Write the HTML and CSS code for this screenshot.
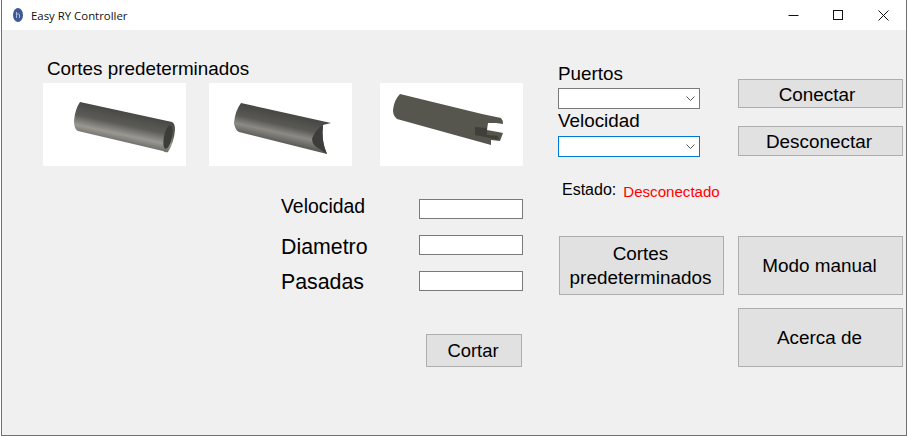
FILE: index.html
```html
<!DOCTYPE html>
<html>
<head>
  <title>Easy RY Controller</title>
  <link rel="stylesheet" href="styles.css">
</head>
<body>
  <div class="window">
    <div class="titlebar">
      <svg class="app-icon" width="12" height="16" viewBox="0 0 12 16">
        <ellipse cx="6" cy="8" rx="5" ry="7" fill="#3d5a96"/>
        <path d="M4.5 11V5M4.5 7.5Q6 6 7.5 7.5V11" fill="none" stroke="#aebbd8" stroke-width="1"/>
      </svg>
      <span class="app-title">Easy RY Controller</span>
      <div class="caption">
        <div class="caption-btn">
          <svg width="11" height="11" viewBox="0 0 11 11"><path d="M0.5 5.5H10.5" stroke="#111" stroke-width="1"/></svg>
        </div>
        <div class="caption-btn">
          <svg width="11" height="11" viewBox="0 0 11 11"><rect x="0.5" y="0.5" width="9" height="9" fill="none" stroke="#111" stroke-width="1"/></svg>
        </div>
        <div class="caption-btn">
          <svg width="11" height="11" viewBox="0 0 11 11"><path d="M0.5 0.5L10.5 10.5M10.5 0.5L0.5 10.5" stroke="#111" stroke-width="1"/></svg>
        </div>
      </div>
    </div>

    <div class="content">
      <div class="cuts">
        <div class="cuts-title">Cortes predeterminados</div>
        <div class="thumbs">
          <svg class="thumb" viewBox="0 0 143 83">
            <defs>
              <linearGradient id="tube1" gradientUnits="userSpaceOnUse" x1="85" y1="27" x2="78" y2="60">
                <stop offset="0" stop-color="#454541"/>
                <stop offset="0.45" stop-color="#5c5b57"/>
                <stop offset="0.75" stop-color="#999892"/>
                <stop offset="1" stop-color="#6a6965"/>
              </linearGradient>
              <linearGradient id="tube2" gradientUnits="userSpaceOnUse" x1="78" y1="28" x2="71" y2="60">
                <stop offset="0" stop-color="#43433f"/>
                <stop offset="0.45" stop-color="#5a5955"/>
                <stop offset="0.7" stop-color="#8b8a84"/>
                <stop offset="1" stop-color="#595854"/>
              </linearGradient>
              <filter id="soft"><feGaussianBlur stdDeviation="0.45"/></filter>
            </defs>
            <g filter="url(#soft)">
              <path d="M37 19L129 39Q132 40 132 47Q131 60 125 69Q123 70 120 68L35 48Q31 46 31 38Q32 26 37 19Z" fill="url(#tube1)"/>
              <ellipse cx="125" cy="54" rx="4" ry="12" transform="rotate(12 125 54)" fill="#3c3c39"/>
            </g>
          </svg>
          <svg class="thumb" viewBox="0 0 143 83">
            <g filter="url(#soft)">
              <path d="M32 20L122 40L114 42Q112 58 118 71L30 49Q26 47 25 40Q26 28 32 20Z" fill="url(#tube2)"/>
              <path d="M114 42Q106 47 103 56Q103 60 106 63L118 71Q112 58 114 42Z" fill="#3d3d3a"/>
            </g>
          </svg>
          <svg class="thumb" viewBox="0 0 143 83">
            <g filter="url(#soft)">
              <path d="M20 11L102 31L121 35Q123 37 123 41L116 40L108 40L107 47L118 49L123 50L120 58L111 57L111 62L17 36Q13 33 13 27Q14 17 20 11Z" fill="#565650"/>
              <path d="M95 44L107 45L107 52L118 53L119 57L110 55L95 52Z" fill="#3f3f3b"/>
            </g>
          </svg>
        </div>
        <div class="params">
          <label class="param-label param-first" for="vel">Velocidad</label>
          <input id="vel" type="text">
          <label class="param-label param-big" for="diam">Diametro</label>
          <input id="diam" type="text">
          <label class="param-label param-big param-last" for="pasadas">Pasadas</label>
          <input id="pasadas" type="text">
        </div>
        <button class="btn btn-cut" type="button">Cortar</button>
      </div>

      <div class="side">
        <div class="side-top">
          <div class="ports">
            <div class="field-label">Puertos</div>
            <div class="combo">
              <svg width="9" height="5" viewBox="0 0 9 5"><path d="M0.5 0.5L4.5 4.500L8.500 0.5" fill="none" stroke="#555" stroke-width="1"/></svg>
            </div>
            <div class="field-label field-second">Velocidad</div>
            <div class="combo combo-focus">
              <svg width="9" height="5" viewBox="0 0 9 5"><path d="M0.5 0.5L4.5 4.500L8.500 0.5" fill="none" stroke="#555" stroke-width="1"/></svg>
            </div>
          </div>
          <div class="connect">
            <button class="btn btn-connect" type="button">Conectar</button>
            <button class="btn btn-disconnect" type="button">Desconectar</button>
          </div>
        </div>

        <div class="status">
          <span class="status-label">Estado:</span>
          <span class="status-value">Desconectado</span>
        </div>

        <div class="actions">
          <button class="btn" type="button">Cortes predeterminados</button>
          <button class="btn" type="button">Modo manual</button>
          <button class="btn btn-about" type="button">Acerca de</button>
        </div>
      </div>
    </div>
  </div>
</body>
</html>
```

FILE: styles.css
```css
html, body {
  margin: 0;
  padding: 0;
  background-color: #fff;
}

body {
  font-family: "Liberation Sans", Arial, sans-serif;
  color: #000;
  overflow: hidden;
}

.window {
  box-sizing: border-box;
  width: 906px;
  height: 436px;
  margin-left: 1px;
  border-left: 1px solid #707070;
  border-right: 1px solid #707070;
  border-bottom: 1px solid #707070;
  display: flex;
  flex-direction: column;
}

.titlebar {
  height: 30px;
  flex: none;
  display: flex;
  align-items: center;
  background-color: #fff;
}

.app-icon {
  margin-left: 10px;
}

.app-title {
  margin-left: 7px;
  font-family: "Open Sans", sans-serif;
  font-size: 11.4px;
  color: #111;
}

.caption {
  margin-left: auto;
  display: flex;
}

.caption-btn {
  width: 45px;
  height: 30px;
  display: flex;
  align-items: center;
  justify-content: center;
}

.content {
  flex: 1;
  display: flex;
  background-color: #f0f0f0;
  padding-left: 41px;
}

.cuts {
  width: 480px;
  padding-top: 29px;
  display: flex;
  flex-direction: column;
}

.cuts-title {
  height: 24px;
  padding-left: 4px;
  font-size: 18.85px;
  line-height: 20px;
}

.thumbs {
  display: flex;
}

.thumb {
  display: block;
  width: 143px;
  height: 83px;
  background-color: #fff;
}

.thumb:nth-child(1) {
  margin-right: 23px;
}

.thumb:nth-child(2) {
  margin-right: 28px;
}

.params {
  margin-top: 33px;
  margin-left: 238px;
  display: grid;
  grid-template-columns: 138px 104px;
  grid-auto-rows: 20px;
  row-gap: 16px;
}

.param-label {
  font-size: 21.33px;
  line-height: 24px;
}

.param-first {
  margin-top: -3px;
  font-size: 19.4px;
  line-height: 20px;
}

.param-last {
  margin-top: -1px;
}

.params input {
  box-sizing: border-box;
  width: 104px;
  height: 20px;
  margin: 0;
  padding: 0 2px;
  border: 1px solid #7a7a7a;
  border-radius: 0;
  background-color: #fff;
  outline: none;
}

.btn {
  box-sizing: border-box;
  margin: 0;
  padding: 0;
  border: 1px solid #adadad;
  border-radius: 0;
  background-color: #e1e1e1;
  color: #000;
  font-family: inherit;
  font-size: 18.9px;
  line-height: 24px;
}

.btn-cut {
  width: 96px;
  height: 33px;
  margin-top: 43px;
  margin-right: 1px;
  padding-right: 2px;
  align-self: flex-end;
  font-size: 18.4px;
}

.side {
  width: 345px;
  margin-left: 35px;
  padding-top: 33px;
}

.side-top {
  display: grid;
  grid-template-columns: 180px 165px;
}

.field-label {
  height: 25px;
  font-size: 18.85px;
  line-height: 21px;
}

.field-second {
  height: 26px;
  margin-top: 1px;
}

.combo {
  box-sizing: border-box;
  width: 142px;
  height: 21px;
  padding-right: 4px;
  border: 1px solid #7a7a7a;
  background-color: #fff;
  display: flex;
  align-items: center;
  justify-content: flex-end;
}

.combo-focus {
  border-color: #0078d7;
}

.connect {
  padding-top: 16px;
  display: flex;
  flex-direction: column;
}

.btn-connect {
  height: 29px;
  padding-top: 2px;
  padding-right: 7px;
}

.btn-disconnect {
  height: 30px;
  margin-top: 18px;
  padding-top: 1px;
  padding-right: 3px;
}

.status {
  margin-top: 24px;
  margin-left: 4px;
  display: flex;
  gap: 7px;
  height: 18px;
  line-height: 18px;
}

.status-label {
  font-size: 16px;
}

.status-value {
  margin-top: 2px;
  font-size: 15.1px;
  color: #f00;
}

.actions {
  margin-top: 37px;
  margin-left: 1px;
  display: grid;
  grid-template-columns: 165px 165px;
  grid-auto-rows: 59px;
  column-gap: 14px;
  row-gap: 13px;
}

.actions .btn {
  padding-right: 2px;
}

.btn-about {
  grid-column: 2;
}
```
